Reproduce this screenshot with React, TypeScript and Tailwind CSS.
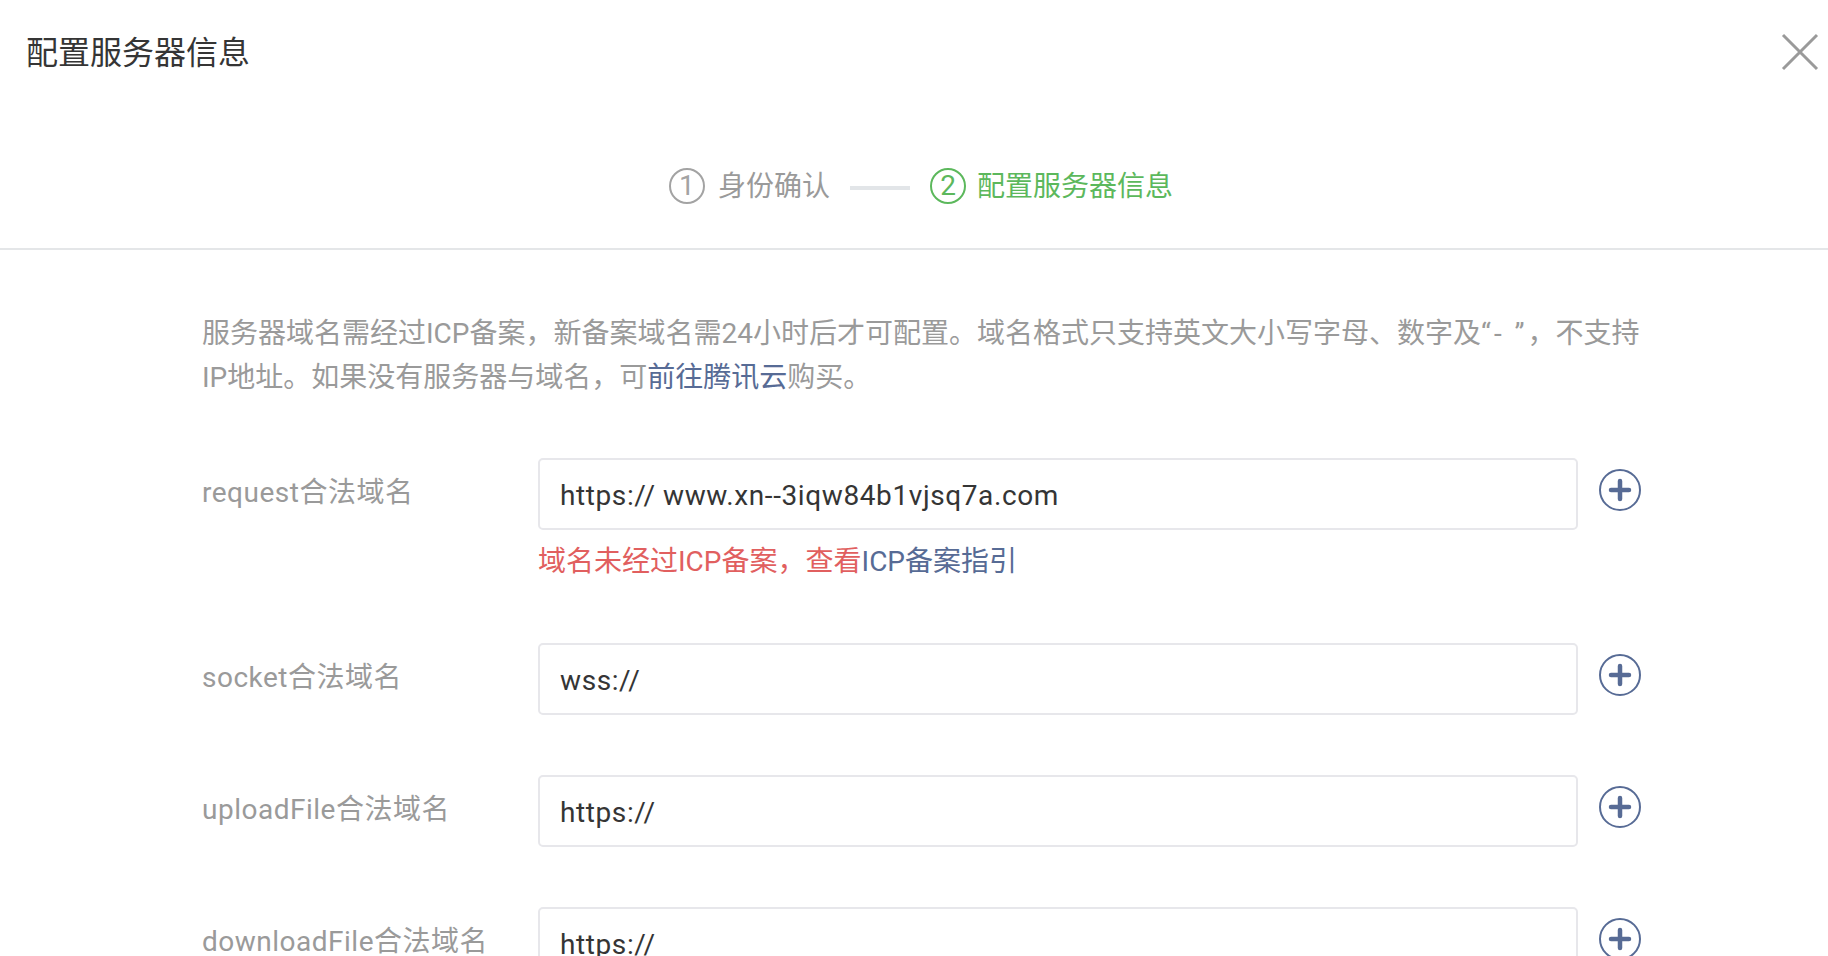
const font = { fontFamily: '"Roboto", "Noto Sans CJK SC", sans-serif' };

function Plus() {
  return (
    <svg width="42" height="42" viewBox="0 0 42 42" className="shrink-0 mt-[11px]">
      <circle cx="21" cy="21" r="20" fill="none" stroke="#576b95" strokeWidth="2" />
      <path d="M12 21h18M21 12v18" stroke="#576b95" strokeWidth="4.5" strokeLinecap="round" />
    </svg>
  );
}

function Row({ label, value, error, mb }: { label: string; value: string; error?: boolean; mb: string }) {
  return (
    <div className={`flex items-start ${mb}`}>
      <div className="w-[336px] shrink-0 text-[28px] leading-[40px] tracking-[0.5px] text-[#9a9a9a] pt-[15px]">{label}</div>
      <div className="w-[1040px] shrink-0">
        <div className="h-[72px] border-2 border-[#e7e7eb] rounded-[5px] pl-[20px] flex items-center text-[28px] tracking-[0.6px] text-[#353535] pt-[3px]">
          {value}
        </div>
        {error && (
          <div className="text-[28px] leading-[40px] mt-[12px] text-[#e15f5f]">
            域名未经过ICP备案，查看<span className="text-[#576b95]">ICP备案指引</span>
          </div>
        )}
      </div>
      <div className="ml-[21px]">
        <Plus />
      </div>
    </div>
  );
}

export default function App() {
  return (
    <div className="w-[1828px] h-[956px] overflow-hidden bg-white" style={font}>
      <div className="h-[250px] border-b-2 border-[#e4e6e8] relative">
        <div className="pl-[26px] pt-[31px] text-[32px] leading-[44px] text-[#353535]">配置服务器信息</div>
        <svg width="38" height="38" viewBox="0 0 38 38" className="absolute right-[9px] top-[33px]">
          <path d="M2 2l34 34M36 2L2 36" stroke="#9a9a9a" strokeWidth="3" />
        </svg>
        <div className="flex items-center justify-center mt-[90px] pl-[14px]">
          <svg width="36" height="36" viewBox="0 0 36 36" className="shrink-0">
            <circle cx="18" cy="18" r="17" fill="none" stroke="#a3a3a3" strokeWidth="2" />
          </svg>
          <span className="-ml-[26px] w-[16px] text-[28px] leading-none text-[#a3a3a3] text-center">1</span>
          <span className="ml-[23px] text-[28px] leading-[40px] text-[#9a9a9a] mt-[2px]">身份确认</span>
          <div className="w-[60px] h-[4px] bg-[#e2e5e8] mx-[20px] mt-[4px]" />
          <svg width="36" height="36" viewBox="0 0 36 36" className="shrink-0">
            <circle cx="18" cy="18" r="17" fill="none" stroke="#5cb85c" strokeWidth="2" />
          </svg>
          <span className="-ml-[27px] w-[18px] text-[28px] leading-none text-[#5cb85c] text-center">2</span>
          <span className="ml-[20px] text-[28px] leading-[40px] text-[#5cb85c] mt-[2px]">配置服务器信息</span>
        </div>
      </div>
      <div className="pl-[202px] w-[1642px] pt-[62px]">
        <p className="text-[28px] leading-[44px] text-[#9a9a9a] mb-[58px]">
          服务器域名需经过ICP备案，新备案域名需24小时后才可配置。域名格式只支持英文大小写字母、数字及<span className="tracking-[3px]">“- ”</span>，不支持IP地址。如果没有服务器与域名，可
          <span className="text-[#576b95]">前往腾讯云</span>购买。
        </p>
        <Row label="request合法域名" value="https:// www.xn--3iqw84b1vjsq7a.com" error mb="mb-[61px]" />
        <Row label="socket合法域名" value="wss://" mb="mb-[60px]" />
        <Row label="uploadFile合法域名" value="https://" mb="mb-[60px]" />
        <Row label="downloadFile合法域名" value="https://" mb="mb-[60px]" />
      </div>
    </div>
  );
}
